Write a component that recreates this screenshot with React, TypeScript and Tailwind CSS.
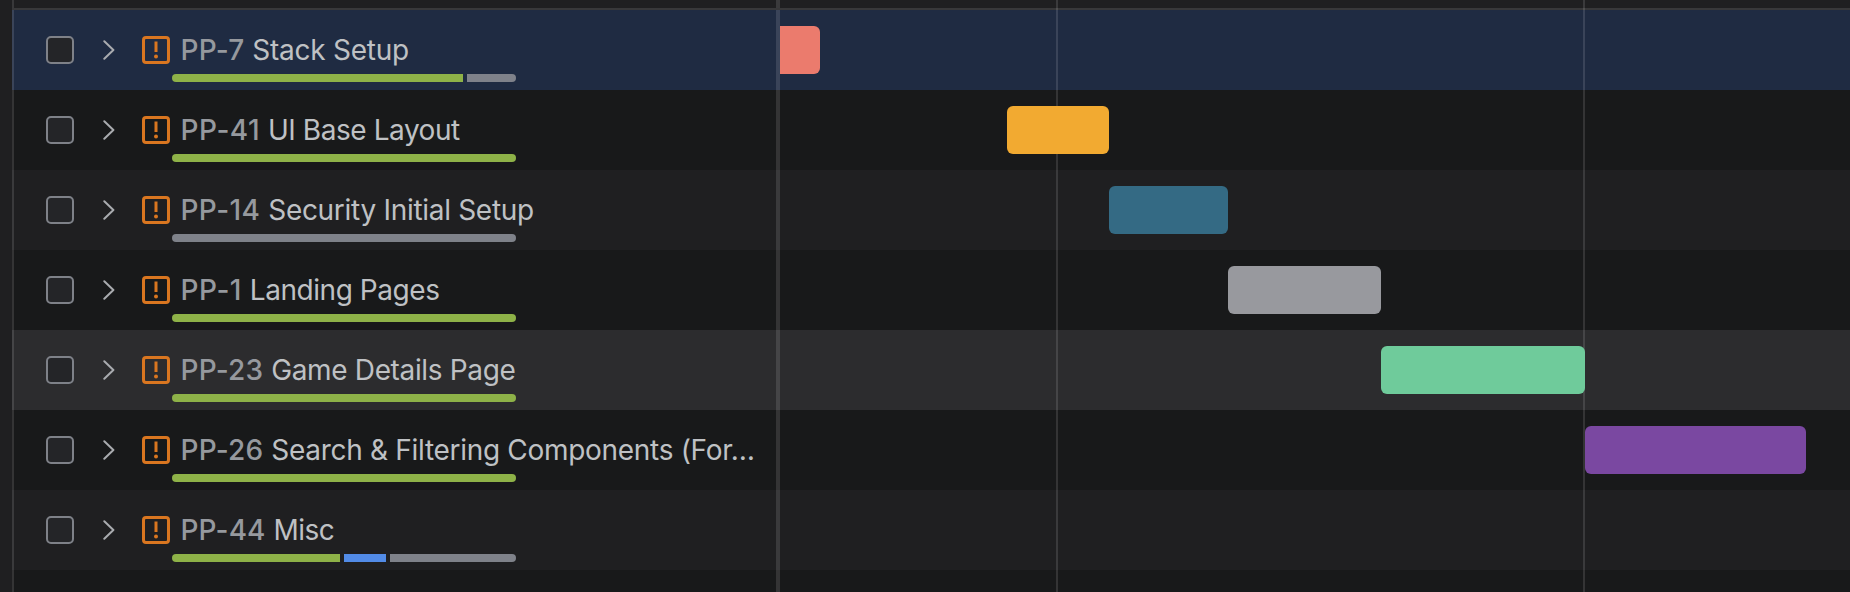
type Segment = { width: number; color: string };

type Epic = {
  id: string;
  title: string;
  idTracking: string;
  titleTracking: string;
  row: string;
  segments: Segment[];
  bar?: { start: number; width: number; style: string };
};

const GREEN = "bg-[#8eb248]";
const GRAY = "bg-[#7f828a]";
const BLUE = "bg-[#528be7]";
const DARK = "bg-[#18191a]";
const BASE = "bg-[#1f1f21]";

const epics: Epic[] = [
  {
    id: "PP-7",
    title: "Stack Setup",
    idTracking: "tracking-[0.2px]",
    titleTracking: "tracking-[-0.25px]",
    row: "bg-[#1f2b42]",
    segments: [
      { width: 291, color: GREEN },
      { width: 49, color: GRAY },
    ],
    bar: { start: 0, width: 40, style: "bg-[#eb7b6d] rounded-r-md" },
  },
  {
    id: "PP-41",
    title: "UI Base Layout",
    idTracking: "tracking-[0.5px]",
    titleTracking: "tracking-[-0.45px]",
    row: DARK,
    segments: [{ width: 344, color: GREEN }],
    bar: { start: 227, width: 102, style: "bg-[#f2aa31] rounded-md" },
  },
  {
    id: "PP-14",
    title: "Security Initial Setup",
    idTracking: "tracking-[0.4px]",
    titleTracking: "tracking-[-0.3px]",
    row: BASE,
    segments: [{ width: 344, color: GRAY }],
    bar: { start: 329, width: 119, style: "bg-[#346a84] rounded-md" },
  },
  {
    id: "PP-1",
    title: "Landing Pages",
    idTracking: "tracking-[0.5px]",
    titleTracking: "tracking-[-0.45px]",
    row: DARK,
    segments: [{ width: 344, color: GREEN }],
    bar: { start: 448, width: 153, style: "bg-[#98999e] rounded-md" },
  },
  {
    id: "PP-23",
    title: "Game Details Page",
    idTracking: "tracking-[0.2px]",
    titleTracking: "tracking-[-0.35px]",
    row: "bg-[#2c2c2e]",
    segments: [{ width: 344, color: GREEN }],
    bar: { start: 601, width: 204, style: "bg-[#6fcb9b] rounded-md" },
  },
  {
    id: "PP-26",
    title: "Search & Filtering Components (For…",
    idTracking: "tracking-[0.2px]",
    titleTracking: "tracking-[-0.3px]",
    row: DARK,
    segments: [{ width: 344, color: GREEN }],
    bar: { start: 805, width: 221, style: "bg-[#7a48a1] rounded-md" },
  },
  {
    id: "PP-44",
    title: "Misc",
    idTracking: "tracking-[0.1px]",
    titleTracking: "tracking-[-0.5px]",
    row: BASE,
    segments: [
      { width: 168, color: GREEN },
      { width: 42, color: BLUE },
      { width: 126, color: GRAY },
    ],
  },
];

function Chevron() {
  return (
    <svg className="ml-[29px] h-5 w-3 shrink-0" viewBox="0 0 12 20" fill="none">
      <path d="M1.3 1.2 L10.4 10 L1.3 18.8" stroke="#a9abaf" strokeWidth="2" strokeLinecap="round" strokeLinejoin="round" />
    </svg>
  );
}

function EpicIcon() {
  return (
    <svg className="ml-[27px] h-7 w-7 shrink-0" viewBox="0 0 28 28" fill="none">
      <rect x="1.5" y="1.5" width="25" height="25" rx="2.5" stroke="#d97620" strokeWidth="3" />
      <rect x="12.5" y="5.5" width="3" height="10.5" fill="#d97620" />
      <circle cx="14" cy="20.4" r="2" fill="#d97620" />
    </svg>
  );
}

function EpicRow({ epic }: { epic: Epic }) {
  return (
    <div className={`flex h-20 shrink-0 border-l-2 border-white/12 ${epic.row}`}>
      <div className="flex w-[762px] shrink-0 flex-col pt-[26px] pl-8">
        <div className="flex h-7 items-center">
          <div className="h-7 w-7 shrink-0 rounded-[5px] border-2 border-[#7e8188] bg-[#242528]" />
          <Chevron />
          <EpicIcon />
          <div className="ml-[10.5px] text-[28px] leading-7 whitespace-nowrap text-[#bfc1c4]">
            <span className={`font-medium text-[#96999e] ${epic.idTracking}`}>{epic.id}</span>{" "}
            <span className={`font-[430] ${epic.titleTracking}`}>{epic.title}</span>
          </div>
        </div>
        <div className="mt-[10px] ml-[126px] flex h-2 w-[344px] gap-1 overflow-hidden rounded-full">
          {epic.segments.map((s, i) => (
            <div key={i} className={`h-2 ${s.color}`} style={{ width: s.width }} />
          ))}
        </div>
      </div>
      <div className="w-1 shrink-0 bg-white/12" />
      <div className="flex flex-1 items-center">
        {epic.bar && (
          <div
            className={`relative z-10 h-12 ${epic.bar.style}`}
            style={{ marginLeft: epic.bar.start, width: epic.bar.width }}
          />
        )}
      </div>
    </div>
  );
}

export default function App() {
  return (
    <div className="relative flex h-[592px] w-[1850px] flex-col overflow-hidden bg-[#1f1f21] pl-3 font-['Inter',sans-serif]">
      <div className="flex h-[10px] shrink-0 border-b-2 border-l-2 border-[#38383a]">
        <div className="w-[762px]" />
        <div className="w-1 bg-white/12" />
      </div>
      {epics.map((epic) => (
        <EpicRow key={epic.id} epic={epic} />
      ))}
      <div className={`flex flex-1 border-l-2 border-white/12 ${DARK}`}>
        <div className="w-[762px]" />
        <div className="w-1 bg-white/12" />
      </div>
      <div className="absolute inset-y-0 left-[1056px] w-0.5 bg-white/12" />
      <div className="absolute inset-y-0 left-[1583px] w-0.5 bg-white/12" />
    </div>
  );
}
